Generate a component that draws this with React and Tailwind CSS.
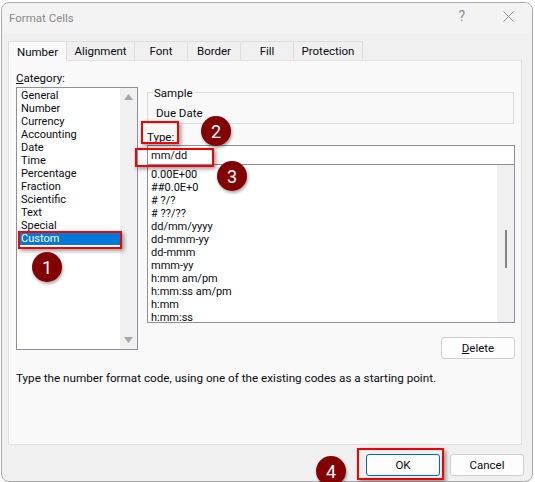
const TABS = [
  { label: 'Number', w: 'w-[59px]', active: true },
  { label: 'Alignment', w: 'w-[69px]' },
  { label: 'Font', w: 'w-[54px]' },
  { label: 'Border', w: 'w-[54px]' },
  { label: 'Fill', w: 'w-[54px]' },
  { label: 'Protection', w: 'w-[70px]' },
];
const CATEGORIES = ['General', 'Number', 'Currency', 'Accounting', 'Date', 'Time', 'Percentage', 'Fraction', 'Scientific', 'Text', 'Special', 'Custom'];
const FORMATS = ['0.00E+00', '##0.0E+0', '# ?/?', '# ??/??', 'dd/mm/yyyy', 'dd-mmm-yy', 'dd-mmm', 'mmm-yy', 'h:mm am/pm', 'h:mm:ss am/pm', 'h:mm', 'h:mm:ss'];

const Arrow = ({ down }) => (
  <svg width="9" height="6" viewBox="0 0 9 6" className="block">
    <path d={down ? 'M0 0H9L4.5 6Z' : 'M0 6H9L4.5 0Z'} fill="#a6a6a6" />
  </svg>
);

const Marker = ({ n, className }) => (
  <div className={`absolute w-[30px] h-[30px] rounded-full bg-[#830000] text-white text-[18px] flex items-center justify-center shadow-[1px_2px_3px_rgba(0,0,0,0.35)] ${className}`}>{n}</div>
);

const RedBox = ({ className }) => (
  <div className={`absolute border-[2px] border-[#f00000] shadow-[2px_2px_4px_rgba(0,0,0,0.4)] ${className}`} />
);

export default function App() {
  return (
    <div className="relative w-[535px] h-[482px] overflow-hidden bg-white text-[11.5px] leading-[13px] text-[#0a0a14] font-['Roboto','Noto_Sans',sans-serif]">
      <div className="ml-[1px] mt-[2px] w-[532px] h-[480px] flex flex-col bg-[#f0f0f0] border border-[#a9a9a9] rounded-[8px]">
        {/* Title bar */}
        <div className="h-[30px] shrink-0 flex items-center bg-[#f3f3f3] rounded-t-[8px] pl-[7px] pr-[18px] pb-[4px]">
          <span className="text-[#8a8a8a] text-[11.5px] mt-[4px]">Format Cells</span>
          <span className="ml-auto text-[#8f8f8f] text-[14px]">?</span>
          <svg width="11" height="11" viewBox="0 0 11 11" className="ml-[38px]">
            <path d="M0.5 0.5L10.5 10.5M10.5 0.5L0.5 10.5" stroke="#8f8f8f" strokeWidth="1" fill="none" />
          </svg>
        </div>

        {/* Tabs */}
        <div className="flex h-[19px] mt-[8px] ml-[6px] items-end shrink-0">
          {TABS.map(t => (
            <div key={t.label} className={`${t.w} flex items-center justify-center border border-b-0 border-[#dedede] -mr-[1px] pt-[1px] ${t.active ? 'h-[20px] bg-[#f9f9f9] relative z-10 -mb-[1px]' : 'h-[19px] bg-[#f0f0f0]'}`}>
              {t.label}
            </div>
          ))}
        </div>

        {/* Panel */}
        <div className="ml-[6px] w-[514px] h-[385px] shrink-0 bg-[#f9f9f9] border border-[#e0e0e0] pl-[7px] pr-[6px] pt-[9px]">
          <div className="flex gap-[9px] h-[281px]">
            <div className="w-[122px] shrink-0">
              <div className="h-[17px] flex items-center pb-[1px]"><span><u>C</u>ategory:</span></div>
              <div className="h-[263px] border border-[#8f8f9d] bg-white flex text-[11px]">
                <div className="flex-1 pt-[1px] pl-[3px]">
                  {CATEGORIES.map(c => (
                    <div key={c} className={`h-[13px] leading-[13px] pl-[1px] ${c === 'Custom' ? 'bg-[#0078d7] text-white' : ''}`}>{c}</div>
                  ))}
                </div>
                <div className="w-[17px] bg-[#f0f0f0] flex flex-col items-center justify-between py-[6px]">
                  <Arrow />
                  <Arrow down />
                </div>
              </div>
            </div>

            <div className="w-[369px] pt-[22px]">
              <div className="relative h-[32px] mr-[1px] border border-[#dcdcdc] pl-[8px] pt-[14px]">
                <span className="absolute left-[5px] -top-[6px] px-[1px] bg-[#f9f9f9]">Sample</span>
                Due Date
              </div>
              <div className="h-[21px] flex items-end pb-[1px]"><span><u>T</u>ype:</span></div>
              <div className="h-[20px] border border-[#8f8f9d] bg-white flex items-center pl-[3px] pt-[1px] text-[11px]">mm/dd</div>
              <div className="h-[159px] -mt-[1px] border border-[#8f8f9d] bg-white flex text-[11px]">
                <div className="flex-1 pt-[2px] pl-[3px]">
                  {FORMATS.map(f => <div key={f} className="h-[13px] leading-[15px]">{f}</div>)}
                </div>
                <div className="w-[17px] bg-[#f0f0f0] pt-[65px] flex justify-center">
                  <div className="w-[2px] h-[38px] bg-[#858585]" />
                </div>
              </div>
            </div>
          </div>

          <div className="flex justify-end h-[22px] -mt-[14px]">
            <button className="w-[74px] h-[22px] bg-[#fdfdfd] border border-[#d0d0d0] rounded-[3px]"><u>D</u>elete</button>
          </div>
          <p className="mt-[13px] text-[11.7px]">Type the number format code, using one of the existing codes as a starting point.</p>
        </div>

        {/* Footer */}
        <div className="flex justify-end gap-[10px] pr-[8px] pt-[9px]">
          <button className="w-[74px] h-[22px] bg-[#fdfdfd] border-[1.5px] border-[#0067c0] rounded-[3px]">OK</button>
          <button className="w-[74px] h-[22px] bg-[#fdfdfd] border border-[#d0d0d0] rounded-[3px]">Cancel</button>
        </div>
      </div>

      {/* Annotations */}
      <RedBox className="left-[18px] top-[231px] w-[104px] h-[18px]" />
      <RedBox className="left-[141px] top-[121px] w-[38px] h-[23px]" />
      <RedBox className="left-[135px] top-[148px] w-[79px] h-[19px]" />
      <RedBox className="left-[357px] top-[448px] w-[87px] h-[32px]" />
      <Marker n="1" className="left-[32px] top-[252px]" />
      <Marker n="2" className="left-[201px] top-[116px]" />
      <Marker n="3" className="left-[217px] top-[161px]" />
      <Marker n="4" className="left-[316px] top-[456px]" />
    </div>
  );
}
